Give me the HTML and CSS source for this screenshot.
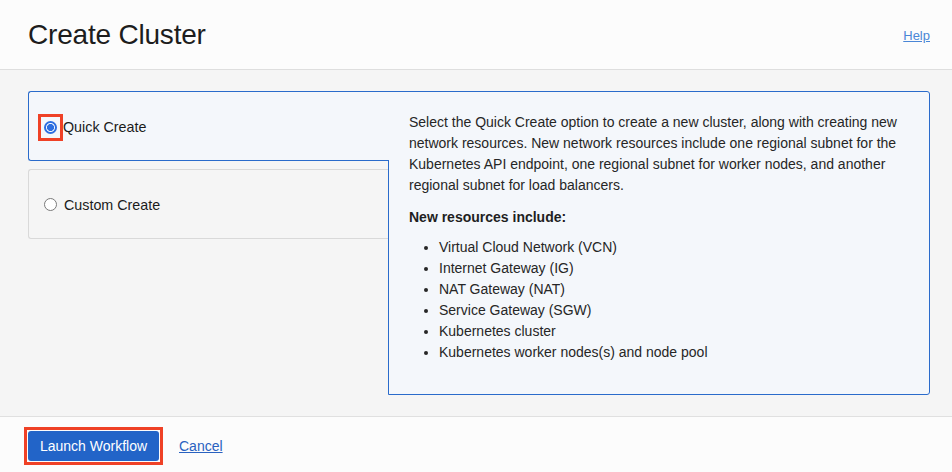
FILE: index.html
```html
<!DOCTYPE html>
<html lang="en">
<head>
<meta charset="utf-8">
<title>Create Cluster</title>
<link rel="stylesheet" href="styles.css">
</head>
<body>
<div class="page">
  <header class="header">
    <h1 class="title">Create Cluster</h1>
    <a class="help" href="#">Help</a>
  </header>
  <main class="main">
    <div class="chooser">
      <div class="options">
        <label class="option selected">
          <span class="radio-mark"><span class="radio checked"></span></span>
          <span class="option-label">Quick Create</span>
        </label>
        <label class="option">
          <span class="radio-plain"><span class="radio"></span></span>
          <span class="option-label">Custom Create</span>
        </label>
      </div>
      <section class="panel">
        <p class="desc">Select the Quick Create option to create a new cluster, along with creating new network resources. New network resources include one regional subnet for the Kubernetes API endpoint, one regional subnet for worker nodes, and another regional subnet for load balancers.</p>
        <p class="subhead">New resources include:</p>
        <ul class="list">
          <li>Virtual Cloud Network (VCN)</li>
          <li>Internet Gateway (IG)</li>
          <li>NAT Gateway (NAT)</li>
          <li>Service Gateway (SGW)</li>
          <li>Kubernetes cluster</li>
          <li>Kubernetes worker nodes(s) and node pool</li>
        </ul>
      </section>
    </div>
  </main>
  <footer class="footer">
    <span class="btn-mark"><button class="primary" type="button">Launch Workflow</button></span>
    <a class="cancel" href="#">Cancel</a>
  </footer>
</div>
</body>
</html>
```
FILE: styles.css
```css
* { box-sizing: border-box; }
html, body {
  margin: 0;
  padding: 0;
}
body {
  width: 952px;
  height: 472px;
  overflow: hidden;
  font-family: "Liberation Sans", Arial, sans-serif;
  color: #161513;
  background: #fcfcfc;
}
.page {
  display: flex;
  flex-direction: column;
  height: 472px;
}
.header {
  height: 70px;
  display: flex;
  align-items: center;
  justify-content: space-between;
  padding: 1px 22px 0 28px;
  background: #fcfcfc;
  border-bottom: 1px solid #dedede;
}
.title {
  margin: 0;
  font-size: 28px;
  font-weight: normal;
  color: #1d1d1d;
  letter-spacing: -0.2px;
}
.help {
  font-size: 13px;
  color: #4a86d6;
  text-decoration: underline;
  margin-top: 1px;
}
.main {
  height: 347px;
  background: #f5f5f5;
  padding: 21px 22px 0 28px;
  border-bottom: 1px solid #e0e0e0;
}
.chooser {
  display: flex;
  align-items: flex-start;
}
.options {
  width: 360px;
  flex: none;
  display: flex;
  flex-direction: column;
  gap: 8px;
}
.option {
  height: 70px;
  display: flex;
  align-items: center;
  gap: 7px;
  padding-left: 15px;
  padding-top: 1px;
  border: 1px solid #d9d9d9;
  border-right: none;
  border-radius: 3px 0 0 3px;
  background: #f5f5f5;
  font-size: 14px;
}
.option.selected {
  height: 70px;
  padding-top: 2px;
  border-color: #2a6bcb;
  background: #f4f7fb;
  position: relative;
  z-index: 1;
  margin-right: -1px;
}
.radio-mark {
  display: flex;
  padding: 4px 3px;
  border: 3px solid #ef4126;
  margin-left: -6px;
  margin-right: -7px;
}
.radio-plain {
  display: flex;
}
.radio {
  width: 13px;
  height: 13px;
  border-radius: 50%;
  border: 1px solid #7a7a7a;
  background: #ffffff;
  display: block;
}
.radio.checked {
  border: 2px solid #2c6ee0;
  background: radial-gradient(circle, #2c6ee0 0 3.3px, #ffffff 3.8px);
}
.option-label {
  color: #1b1b1b;
  font-size: 14.3px;
}
.panel {
  width: 542px;
  height: 304px;
  flex: none;
  border: 1px solid #2a6bcb;
  border-radius: 0 3px 3px 0;
  background: #f4f7fb;
  padding: 20px 20px 0 20px;
  font-size: 14px;
  line-height: 21px;
  color: #262626;
}
.desc {
  margin: 0 0 11px;
}
.subhead {
  margin: 0 0 9px;
  font-weight: bold;
  color: #1f1f1f;
}
.list {
  margin: 0;
  padding-left: 30px;
}
.list li {
  line-height: 21px;
}
.footer {
  flex: 1;
  display: flex;
  align-items: center;
  gap: 16px;
  padding: 3px 24px 0;
  background: #fcfcfc;
}
.btn-mark {
  display: flex;
  padding: 1px;
  border: 3px solid #ef4126;
}
.primary {
  height: 30px;
  width: 131px;
  padding: 0;
  border: none;
  border-radius: 3px;
  background: #2264c8;
  color: #ffffff;
  font-family: "Liberation Sans", Arial, sans-serif;
  font-size: 14px;
}
.cancel {
  font-size: 14px;
  color: #2a62c0;
  text-decoration: underline;
}
```
